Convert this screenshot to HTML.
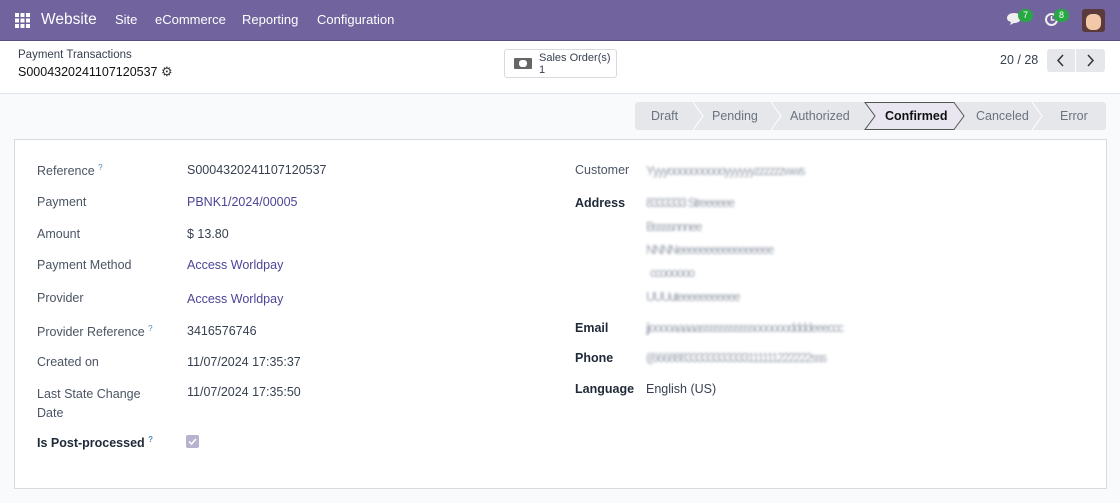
<!DOCTYPE html>
<html><head><style>
body{margin:0;width:1120px;height:503px;background:#f9fafb;font-family:"Liberation Sans",sans-serif;position:relative;overflow:hidden;font-size:12.5px;color:#374151}
.a{position:absolute;white-space:nowrap}
.nav{position:absolute;left:0;top:0;width:1120px;height:40px;background:#71639e;border-bottom:1px solid #5a4f80}
.nav span{position:absolute;top:12px;color:#fff;font-size:13px}
.cp{position:absolute;left:0;top:41px;width:1120px;height:52px;background:#fff;border-bottom:1px solid #dee2e6}
.sheet{position:absolute;left:14px;top:139px;width:1091px;height:348px;background:#fff;border:1px solid #d8dadd}
.l{color:#4b5563}
.b{color:#1f2937;font-weight:bold;-webkit-text-stroke:0}
.bl{filter:blur(1.2px);color:#9ca3af;letter-spacing:-1.3px}
.v{color:#374151}
.link{color:#4b4596}
.sb{position:absolute;top:102px;height:28px;background:#e5e7eb;}
.st{position:absolute;top:109px;color:#6b7280;font-size:12.5px}
</style></head><body>
<div class="nav">
<svg class="a" style="left:15px;top:13px" width="15" height="15"><g fill="#fff"><rect x="0" y="0" width="4" height="4"/><rect x="5.5" y="0" width="4" height="4"/><rect x="11" y="0" width="4" height="4"/><rect x="0" y="5.5" width="4" height="4"/><rect x="5.5" y="5.5" width="4" height="4"/><rect x="11" y="5.5" width="4" height="4"/><rect x="0" y="11" width="4" height="4"/><rect x="5.5" y="11" width="4" height="4"/><rect x="11" y="11" width="4" height="4"/></g></svg>
<span style="left:41px;top:11px;font-size:15.5px">Website</span>
<span style="left:115px">Site</span><span style="left:155px">eCommerce</span><span style="left:242px">Reporting</span><span style="left:317px">Configuration</span>
<svg class="a" style="left:1006px;top:12px" width="16" height="14"><path d="M1 6c0-3 3-5 7-5s7 2 7 5-3 5-7 5l-4 2 1-3C2 9 1 8 1 6z" fill="#eee"/></svg>
<div class="a" style="left:1018px;top:9px;width:15px;height:13px;border-radius:7px;background:#28a745;color:#fff;font-size:9px;text-align:center;line-height:13px">7</div>
<svg class="a" style="left:1044px;top:12px" width="15" height="15"><circle cx="7.5" cy="7.5" r="5.5" fill="none" stroke="#eee" stroke-width="2"/><path d="M7.5 4v4h3" stroke="#eee" stroke-width="1.5" fill="none"/></svg>
<div class="a" style="left:1054px;top:9px;width:15px;height:13px;border-radius:7px;background:#28a745;color:#fff;font-size:9px;text-align:center;line-height:13px">8</div>
<div class="a" style="left:1082px;top:9px;width:23px;height:23px;border-radius:3px;background:#5a3a3a"><div style="margin:5px 4px;width:15px;height:16px;border-radius:6px;background:#f2c9a8"></div></div>
</div>
<div class="cp">
<div class="a" style="left:18px;top:8px;font-size:11.5px;color:#374151">Payment Transactions</div>
<div class="a" style="left:18px;top:23px;font-size:12.5px;color:#111">S0004320241107120537 <span style="font-size:13px;color:#333">⚙</span></div>
<div class="a" style="left:504px;top:8px;width:111px;height:27px;border:1px solid #d8dadd;border-radius:3px;background:#fff">
<div class="a" style="left:9px;top:8px;width:18px;height:11px;background:#666;border-radius:1px"><div style="margin:2px 5px;width:8px;height:7px;background:#fff;border-radius:3px"></div></div>
<div class="a" style="left:34px;top:2px;font-size:11px;line-height:12px;color:#374151">Sales Order(s)<br>1</div></div>
<div class="a" style="left:1000px;top:12px;color:#374151">20 / 28</div>
<div class="a" style="left:1047px;top:8px;width:58px;height:23px;background:#e5e7eb;border-radius:3px"><div class="a" style="left:28px;top:0;width:1px;height:23px;background:#fff"></div>
<svg class="a" style="left:9px;top:5px" width="10" height="13"><path d="M7 1L2 6.5 7 12" stroke="#333" stroke-width="1.5" fill="none"/></svg>
<svg class="a" style="left:38px;top:5px" width="10" height="13"><path d="M3 1l5 5.5L3 12" stroke="#333" stroke-width="1.5" fill="none"/></svg></div>
</div>
<div class="sb" style="left:635px;width:471px;border-radius:3px"></div>
<svg class="a" style="left:635px;top:102px" width="471" height="28"><g fill="none" stroke="#fff" stroke-width="1"><path d="M58 0l10 14-10 14M136 0l10 14-10 14M319 0l10 14-10 14M397 0l10 14-10 14"/></g><path d="M230 0.5h89l10 13.5-10 13.5h-89l10-13.5z" fill="#e9e6f1" stroke="#555" stroke-width="1"/></svg>
<div class="st" style="left:651px">Draft</div><div class="st" style="left:712px">Pending</div><div class="st" style="left:790px">Authorized</div><div class="st" style="left:885px;color:#111;font-weight:bold">Confirmed</div><div class="st" style="left:976px">Canceled</div><div class="st" style="left:1060px">Error</div>
<div class="sheet"></div>
<div class="a l" style="left:37px;top:163px">Reference <sup style="color:#4b8bbe;font-size:8px">?</sup></div><div class="a v" style="left:187px;top:163px">S0004320241107120537</div>
<div class="a l" style="left:37px;top:195px">Payment</div><div class="a link" style="left:187px;top:195px">PBNK1/2024/00005</div>
<div class="a l" style="left:37px;top:227px">Amount</div><div class="a v" style="left:187px;top:227px">$ 13.80</div>
<div class="a l" style="left:37px;top:258px">Payment Method</div><div class="a link" style="left:187px;top:258px">Access Worldpay</div>
<div class="a l" style="left:37px;top:291px">Provider</div><div class="a link" style="left:187px;top:292px">Access Worldpay</div>
<div class="a l" style="left:37px;top:324px">Provider Reference <sup style="color:#4b8bbe;font-size:8px">?</sup></div><div class="a v" style="left:187px;top:324px">3416576746</div>
<div class="a l" style="left:37px;top:355px">Created on</div><div class="a v" style="left:187px;top:355px">11/07/2024 17:35:37</div>
<div class="a l" style="left:37px;top:385px;line-height:19px">Last State Change<br>Date</div><div class="a v" style="left:187px;top:385px">11/07/2024 17:35:50</div>
<div class="a b" style="left:37px;top:435px">Is Post-processed <sup style="color:#4b8bbe;font-size:8px">?</sup></div>
<div class="a" style="left:186px;top:435px;width:13px;height:13px;border-radius:2px;background:#b7b3cf"><svg width="13" height="13"><path d="M3 6.5l2.5 2.5L10 4" stroke="#fff" stroke-width="1.5" fill="none"/></svg></div>
<div class="a l" style="left:575px;top:163px">Customer</div><div class="a bl" style="left:646px;top:164px">Yyyyooooooooooyyyyyyzzzzzzwws</div>
<div class="a b" style="left:575px;top:196px">Address</div>
<div class="a bl" style="left:646px;top:196px">8333333 Streeeeee</div>
<div class="a bl" style="left:646px;top:220px">Bssssnnnee</div>
<div class="a bl" style="left:646px;top:243px">NNNNeeeeeeeeeeeeeeeee</div>
<div class="a bl" style="left:650px;top:266px">ccoooooo</div>
<div class="a bl" style="left:646px;top:290px">UUUuteeeeeeeeeee</div>
<div class="a b" style="left:575px;top:321px">Email</div><div class="a bl" style="left:646px;top:321px">jjooooaaaaasssssssssssooooooddddeeeccc</div>
<div class="a b" style="left:575px;top:351px">Phone</div><div class="a bl" style="left:646px;top:351px">((66688833333333333111111222222sss</div>
<div class="a b" style="left:575px;top:382px">Language</div><div class="a v" style="left:646px;top:382px">English (US)</div>
</body></html>
